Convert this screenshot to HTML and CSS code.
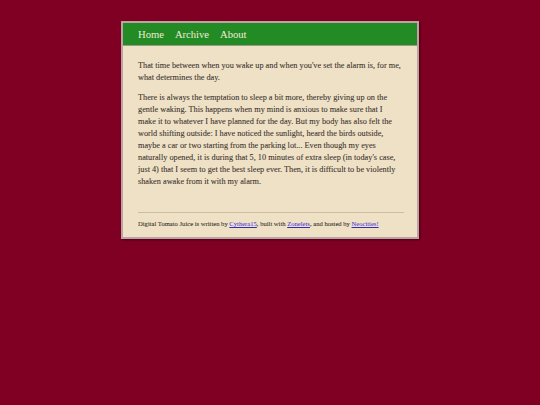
FILE: index.html
```html
<!DOCTYPE html>
<html lang="en">
<head>
<meta charset="utf-8">
<title>Digital Tomato Juice</title>
<link rel="stylesheet" href="styles.css">
</head>
<body>
<div class="container">
  <nav class="nav">
    <a href="#">Home</a>
    <a href="#">Archive</a>
    <a href="#">About</a>
  </nav>
  <main class="content">
    <p>That time between when you wake up and when you've set the alarm is, for me,<br>what determines the day.</p>
    <p>There is always the temptation to sleep a bit more, thereby giving up on the<br>gentle waking. This happens when my mind is anxious to make sure that I<br>make it to whatever I have planned for the day. But my body has also felt the<br>world shifting outside: I have noticed the sunlight, heard the birds outside,<br>maybe a car or two starting from the parking lot... Even though my eyes<br>naturally opened, it is during that 5, 10 minutes of extra sleep (in today's case,<br>just 4) that I seem to get the best sleep ever. Then, it is difficult to be violently<br>shaken awake from it with my alarm.</p>
    <hr class="rule">
    <footer class="footer">Digital Tomato Juice is written by <a href="#">Cythera15</a>, built with <a href="#">Zonelets</a>, and hosted by <a href="#">Neocities!</a></footer>
  </main>
</div>
</body>
</html>
```

FILE: styles.css
```css
html, body {
  margin: 0;
  padding: 0;
}
body {
  background: #7f0022;
  font-family: "Liberation Serif", "DejaVu Serif", serif;
  padding-top: 21px;
  height: 405px;
  box-sizing: border-box;
}
.container {
  width: 294px;
  margin: 0 auto;
  border: 2px solid #bca3a6;
  box-shadow: 1px 1px 2px rgba(0, 0, 0, 0.45);
}
.nav {
  display: flex;
  align-items: center;
  gap: 11px;
  height: 22px;
  padding-left: 15px;
  background: #238b23;
  border-bottom: 1px solid #9c9888;
}
.nav a {
  color: #f2ead8;
  text-decoration: none;
  font-size: 10.6px;
}
.content {
  background: #efe1c5;
  padding: 14px 13px 8px 15px;
  color: #3a322e;
  font-size: 8.25px;
  line-height: 12px;
  -webkit-text-stroke: 0.08px #3a322e;
}
.content p {
  margin: 0 0 8px;
  white-space: nowrap;
}
.rule {
  border: 0;
  border-top: 1px solid #cbbca2;
  margin: 24px 0 0;
}
.footer {
  font-size: 6.6px;
  line-height: 10px;
  margin-top: 6px;
}
.footer a {
  color: #3328d0;
  -webkit-text-stroke: 0;
}
```
